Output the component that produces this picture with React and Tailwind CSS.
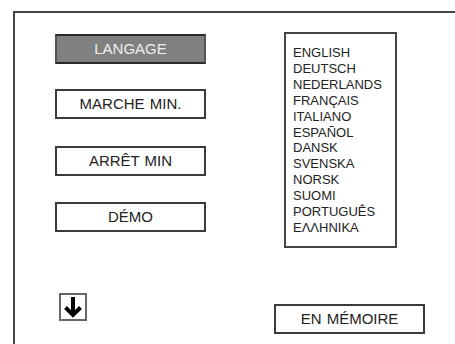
export default function App() {
  const langs = [
    "ENGLISH",
    "DEUTSCH",
    "NEDERLANDS",
    "FRANÇAIS",
    "ITALIANO",
    "ESPAÑOL",
    "DANSK",
    "SVENSKA",
    "NORSK",
    "SUOMI",
    "PORTUGUÊS",
    "ΕΛΛΗΝΙΚΑ",
  ];
  const font = { fontFamily: '"Liberation Sans", Arial, sans-serif' };
  const btn =
    "w-[151px] h-[30px] border-2 border-[#3a3a3a] bg-white flex items-center justify-center text-[15px] text-[#222] [word-spacing:1px]";
  return (
    <div
      className="w-[455px] h-[344px] overflow-hidden bg-white pt-[11px] pl-[13px]"
      style={font}
    >
      <div className="w-[460px] h-[360px] border-l-2 border-t-2 border-[#444] flex">
        <div className="ml-[40px] mt-[21px] flex flex-col">
          <div className="w-[151px] h-[30px] border-2 border-t-[#2a2a2a] border-b-[#2a2a2a] border-l-[#555] border-r-[#555] bg-[#808080] flex items-center justify-center text-[15px] text-[#eeeeee]">
            LANGAGE
          </div>
          <div className={btn + " mt-[25px]"}>MARCHE MIN.</div>
          <div className={btn + " mt-[27px]"}>ARRÊT MIN</div>
          <div className={btn + " mt-[26px]"}>DÉMO</div>
          <div className="mt-[61px] ml-[4px] w-[28px] h-[28px] border-2 border-[#666] flex items-center justify-center">
            <svg width="24" height="24" viewBox="0 0 24 24">
              <path d="M12 2 V20" stroke="#000" strokeWidth="4" fill="none" />
              <path
                d="M4.5 12.5 L12 20 L19.5 12.5"
                stroke="#000"
                strokeWidth="4"
                fill="none"
                strokeLinejoin="miter"
              />
            </svg>
          </div>
        </div>
        <div className="ml-[68px] mt-[19px] flex flex-col">
          <div className="ml-[10px] w-[113px] h-[216px] border-2 border-[#444] pl-[7px] pt-[11px] text-[13px] leading-[15.9px] text-[#222]">
            {langs.map((l) => (
              <div key={l}>{l}</div>
            ))}
          </div>
          <div className={btn + " mt-[56px]"}>EN MÉMOIRE</div>
        </div>
      </div>
    </div>
  );
}
